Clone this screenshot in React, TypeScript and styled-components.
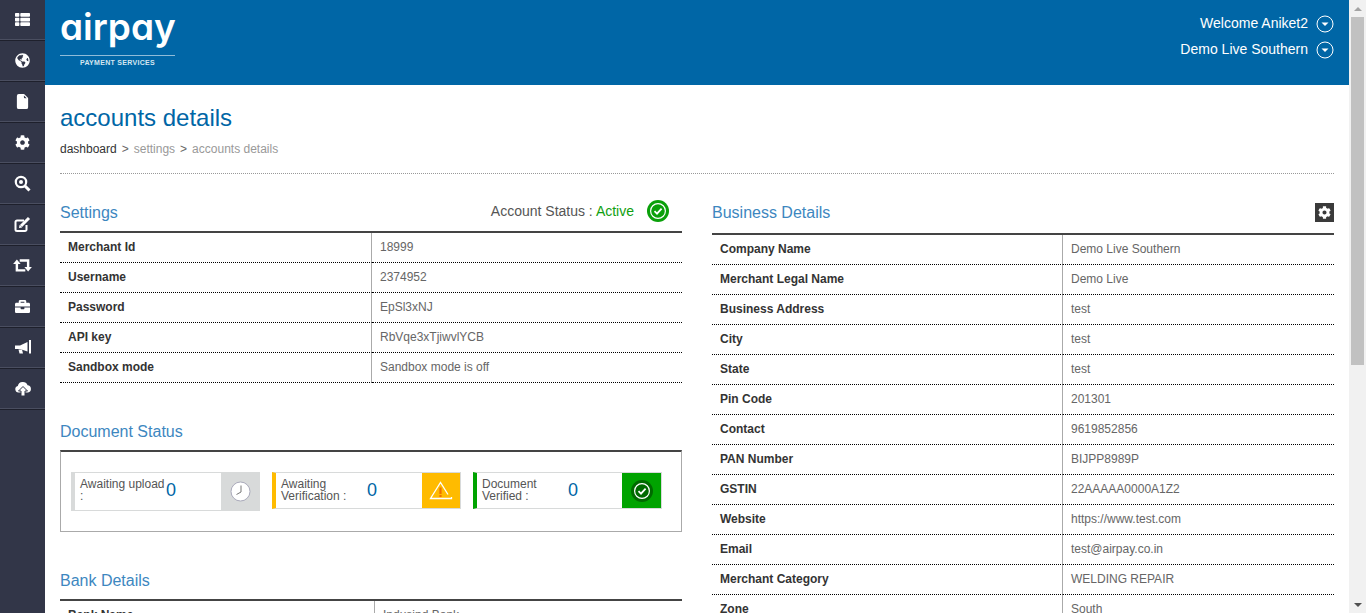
import React from 'react';
import styled, { createGlobalStyle } from 'styled-components';
import { FaThList, FaGlobeAmericas, FaCog, FaBriefcase } from 'react-icons/fa';
import { BsFileEarmarkFill } from 'react-icons/bs';

const GlobalStyle = createGlobalStyle`
  html, body {
    margin: 0;
    padding: 0;
    background: #fff;
    font-family: "Liberation Sans", Arial, sans-serif;
    color: #333;
  }
  * { box-sizing: border-box; }
`;

const Page = styled.div`
  display: flex;
  height: 100vh;
  overflow: hidden;
`;

const Sidebar = styled.nav`
  width: 45px;
  flex: none;
  background: #323648;
`;

const NavItem = styled.a`
  display: flex;
  height: 41px;
  align-items: center;
  justify-content: center;
  padding-bottom: 2px;
  color: #fff;
  font-size: 15px;
  border-bottom: 1px solid #1e202c;
  box-shadow: inset 0 -1px 0 #4a4e60;
`;

const Main = styled.div`
  flex: 1;
  min-width: 0;
  overflow: hidden;
`;

// the page's own scrollbar, as the browser drew it in the picture
const ScrollTrack = styled.div`
  width: 17px;
  flex: none;
  background: #f1f1f1;
  display: flex;
  flex-direction: column;
  align-items: center;
`;

const ScrollArrow = styled.div<{ $down?: boolean }>`
  height: 17px;
  flex: none;
  display: flex;
  align-items: center;
  justify-content: center;
  &::before {
    content: '';
    border-left: 4px solid transparent;
    border-right: 4px solid transparent;
    border-${({ $down }) => ($down ? 'top' : 'bottom')}: 4px solid ${({ $down }) => ($down ? '#505050' : '#a3a3a3')};
  }
`;

const ScrollThumb = styled.div`
  width: 13px;
  height: 348px;
  flex: none;
  background: #c1c1c1;
`;

const ScrollSpace = styled.div`
  flex: 1;
`;

const Header = styled.header`
  height: 85px;
  background: #0066a6;
  padding: 0 15px;
  display: flex;
  justify-content: space-between;
  color: #fff;
`;

const Logo = styled.div`
  width: 115px;
  margin-top: 6px;
`;

const LogoWord = styled.div`
  font-family: "Inter", "Open Sans", sans-serif;
  font-feature-settings: "cv11";
  font-weight: 600;
  font-size: 37px;
  line-height: 42px;
  height: 49px;
`;

const LogoTag = styled.div`
  border-top: 1px solid #8fbcd9;
  font-size: 7px;
  font-weight: bold;
  line-height: 13px;
  letter-spacing: 0.3px;
  text-align: center;
  color: #d5e6f1;
`;

const UserMenu = styled.div`
  padding-top: 11px;
  display: flex;
  flex-direction: column;
  align-items: flex-end;
`;

const UserRow = styled.div`
  display: flex;
  align-items: center;
  gap: 8px;
  height: 26px;
  font-size: 14px;
`;

const UserName = styled.span`
  margin-bottom: 2px;
`;

const Content = styled.main`
  padding: 0 15px;
`;

const Title = styled.h1`
  margin: 0;
  padding-top: 19px;
  font-size: 24px;
  line-height: 28px;
  font-weight: normal;
  color: #0066a6;
`;

const Breadcrumb = styled.div`
  display: flex;
  gap: 5px;
  margin-top: 9px;
  height: 33px;
  padding-top: 1px;
  font-size: 12px;
  line-height: 14px;
  color: #999;
  border-bottom: 1px dotted #999;
`;

const Crumb = styled.span<{ $active?: boolean }>`
  color: ${({ $active }) => ($active ? '#333' : '#999')};
`;

const CrumbSep = styled.span`
  color: #666;
`;

const Columns = styled.div`
  display: grid;
  grid-template-columns: 622px 622px;
  column-gap: 30px;
  padding-top: 26px;
`;

const Section = styled.section<{ $gap?: number }>`
  margin-bottom: ${({ $gap }) => $gap ?? 0}px;
`;

const SectionHead = styled.div<{ $height: number }>`
  display: flex;
  justify-content: space-between;
  align-items: flex-start;
  height: ${({ $height }) => $height}px;
`;

const SectionTitle = styled.h2`
  margin: 0;
  padding-top: 3px;
  font-size: 16px;
  line-height: 20px;
  font-weight: normal;
  color: #3d87bf;
`;

const AccountStatus = styled.div`
  display: flex;
  align-items: center;
  gap: 13px;
  padding: 0 13px 0 0;
  height: 22px;
  font-size: 14px;
  color: #555;
`;

const ActiveText = styled.span`
  color: #10a010;
`;

const GearButton = styled.div`
  width: 19px;
  height: 19px;
  margin-top: 3px;
  background: #3a3a3a;
  color: #fff;
  display: flex;
  align-items: center;
  justify-content: center;
  font-size: 13px;
`;

const DetailTable = styled.div<{ $labelWidth: number }>`
  border-top: 2px solid #444;
  display: grid;
  grid-template-columns: ${({ $labelWidth }) => $labelWidth}px 1fr;
`;

const LabelCell = styled.div`
  height: 30px;
  padding: 0 8px 2px;
  display: flex;
  align-items: center;
  font-size: 12px;
  font-weight: bold;
  color: #333;
  border-bottom: 1px dotted #000;
  border-right: 1px solid #aaa;
`;

const ValueCell = styled.div`
  height: 30px;
  padding: 0 8px 2px;
  display: flex;
  align-items: center;
  font-size: 12px;
  color: #666;
  border-bottom: 1px dotted #000;
`;

const StatusBox = styled.div`
  height: 82px;
  border: 1px solid #aaa;
  border-top: 2px solid #444;
  padding: 20px 10px;
  display: flex;
  align-items: flex-start;
  gap: 12px;
`;

const Widget = styled.div<{ $accent: string; $tall?: boolean }>`
  width: 189px;
  height: ${({ $tall }) => ($tall ? 39 : 37)}px;
  display: flex;
  align-items: stretch;
  border: 1px solid #d8dada;
  border-left: 4px solid ${({ $accent }) => $accent};
`;

const WidgetLabel = styled.div`
  width: 91px;
  padding: 5px 0 0 5px;
  font-size: 12px;
  line-height: 12px;
  color: #555;
`;

const WidgetCount = styled.div`
  flex: 1;
  padding-top: 7px;
  font-size: 18px;
  line-height: 20px;
  color: #0066a6;
`;

const WidgetIcon = styled.div<{ $bg: string; $wide?: boolean }>`
  width: ${({ $wide }) => ($wide ? 39 : 38)}px;
  flex: none;
  background: ${({ $bg }) => $bg};
  display: flex;
  align-items: center;
  justify-content: center;
`;

const ClockIcon = () => (
  <svg width="21" height="21" viewBox="0 0 21 21">
    <circle cx="10.5" cy="10.5" r="9.5" fill="#fff" stroke="#aab" strokeWidth="1" />
    <path d="M11 4.5V11L6.5 13.5" fill="none" stroke="#777" strokeWidth="1" />
  </svg>
);

const WarningIcon = () => (
  <svg width="24" height="20" viewBox="0 0 24 20">
    <path d="M19 13.5L11.5 1.5L1.5 17.5H22.5V16" fill="none" stroke="#fff" strokeWidth="1.3" />
    <path d="M11.5 6.5V13" stroke="#f07000" strokeWidth="2.2" />
    <path d="M11.5 14V16" stroke="#f07000" strokeWidth="2.2" />
  </svg>
);

const CheckBadge = ({ size, ring }: { size: number; ring: string }) => (
  <svg width={size} height={size} viewBox="0 0 22 22">
    <circle cx="11" cy="11" r="11" fill={ring} />
    <circle cx="11" cy="11" r="7.4" fill="none" stroke="#fff" strokeWidth="1.2" />
    <path d="M7.5 11.2L10 13.6L14.6 8.6" fill="none" stroke="#fff" strokeWidth="1.8" />
  </svg>
);

const DropCircle = () => (
  <svg width="18" height="18" viewBox="0 0 18 18">
    <circle cx="9" cy="9" r="8" fill="none" stroke="#fff" strokeWidth="1" />
    <path d="M5.5 7.5H12.5L9 11Z" fill="#fff" />
  </svg>
);

const ZoomIcon = () => (
  <svg width="17" height="17" viewBox="0 0 17 17">
    <circle cx="7" cy="7" r="5.2" fill="none" stroke="#fff" strokeWidth="2.2" />
    <circle cx="7" cy="7" r="2" fill="#fff" />
    <path d="M11 11L15.5 15.5" stroke="#fff" strokeWidth="3" />
  </svg>
);

const EditIcon = () => (
  <svg width="17" height="17" viewBox="0 0 17 17">
    <path
      d="M12.5 9V13.5A1.5 1.5 0 0 1 11 15H3A1.5 1.5 0 0 1 1.5 13.5V6A1.5 1.5 0 0 1 3 4.5H10"
      fill="none"
      stroke="#fff"
      strokeWidth="2"
    />
    <path d="M7 10L15 2" stroke="#fff" strokeWidth="3" />
    <path d="M5 12L5.6 8.8L8.2 11.4Z" fill="#fff" />
  </svg>
);

const RetweetIcon = () => (
  <svg width="19" height="15" viewBox="0 0 20 16">
    <path d="M0 6.5L4 1.5L8 6.5Z" fill="#fff" />
    <path d="M4 6V13.2H13" fill="none" stroke="#fff" strokeWidth="2.6" />
    <path d="M7 2.6H16V10" fill="none" stroke="#fff" strokeWidth="2.6" />
    <path d="M12 9.5L16 14.5L20 9.5Z" fill="#fff" />
  </svg>
);

const BullhornIcon = () => (
  <svg width="18" height="16" viewBox="0 0 18 16">
    <path d="M1 6.5H6L13.5 3V12.5L6 10H1Z" fill="#fff" />
    <path d="M15 1H17V14.5H15Z" fill="#fff" />
    <path d="M4.5 10.5H8L9 14.5H5.5Z" fill="#fff" />
  </svg>
);

const CloudUploadIcon = () => (
  <svg width="18" height="17" viewBox="0 0 18 17">
    <path
      d="M4.5 12.5A3.3 3.3 0 0 1 3.8 6A5.2 5.2 0 0 1 13.6 5.2A3.7 3.7 0 0 1 14 12.5Z"
      fill="#fff"
    />
    <path d="M9 6.5L13.5 11H11V16H7V11H4.5Z" fill="#fff" stroke="#323648" strokeWidth="1" />
  </svg>
);

const navIcons = [
  <FaThList />,
  <FaGlobeAmericas />,
  <BsFileEarmarkFill />,
  <FaCog />,
  <ZoomIcon />,
  <EditIcon />,
  <RetweetIcon />,
  <FaBriefcase />,
  <BullhornIcon />,
  <CloudUploadIcon />,
];

const settingsRows = [
  ['Merchant Id', '18999'],
  ['Username', '2374952'],
  ['Password', 'EpSl3xNJ'],
  ['API key', 'RbVqe3xTjiwvlYCB'],
  ['Sandbox mode', 'Sandbox mode is off'],
];

const bankRows = [['Bank Name', 'Indusind Bank']];

const businessRows = [
  ['Company Name', 'Demo Live Southern'],
  ['Merchant Legal Name', 'Demo Live'],
  ['Business Address', 'test'],
  ['City', 'test'],
  ['State', 'test'],
  ['Pin Code', '201301'],
  ['Contact', '9619852856'],
  ['PAN Number', 'BIJPP8989P'],
  ['GSTIN', '22AAAAA0000A1Z2'],
  ['Website', 'https://www.test.com'],
  ['Email', 'test@airpay.co.in'],
  ['Merchant Category', 'WELDING REPAIR'],
  ['Zone', 'South'],
];

const Rows = ({ rows, labelWidth }: { rows: string[][]; labelWidth: number }) => (
  <DetailTable $labelWidth={labelWidth}>
    {rows.map(([label, value]) => (
      <React.Fragment key={label}>
        <LabelCell>{label}</LabelCell>
        <ValueCell>{value}</ValueCell>
      </React.Fragment>
    ))}
  </DetailTable>
);

export default function App() {
  return (
    <>
      <GlobalStyle />
      <Page>
        <Sidebar>
          {navIcons.map((icon, i) => (
            <NavItem key={i}>{icon}</NavItem>
          ))}
        </Sidebar>
        <Main>
          <Header>
            <Logo>
              <LogoWord>airpay</LogoWord>
              <LogoTag>PAYMENT SERVICES</LogoTag>
            </Logo>
            <UserMenu>
              <UserRow>
                <UserName>Welcome Aniket2</UserName>
                <DropCircle />
              </UserRow>
              <UserRow>
                <UserName>Demo Live Southern</UserName>
                <DropCircle />
              </UserRow>
            </UserMenu>
          </Header>
          <Content>
            <Title>accounts details</Title>
            <Breadcrumb>
              <Crumb $active>dashboard</Crumb>
              <CrumbSep>&gt;</CrumbSep>
              <Crumb>settings</Crumb>
              <CrumbSep>&gt;</CrumbSep>
              <Crumb>accounts details</Crumb>
            </Breadcrumb>
            <Columns>
              <div>
                <Section $gap={36}>
                  <SectionHead $height={31}>
                    <SectionTitle>Settings</SectionTitle>
                    <AccountStatus>
                      <span>
                        Account Status : <ActiveText>Active</ActiveText>
                      </span>
                      <CheckBadge size={22} ring="#0aa00a" />
                    </AccountStatus>
                  </SectionHead>
                  <Rows rows={settingsRows} labelWidth={312} />
                </Section>
                <Section $gap={36}>
                  <SectionHead $height={31}>
                    <SectionTitle>Document Status</SectionTitle>
                  </SectionHead>
                  <StatusBox>
                    <Widget $accent="#d8dada" $tall>
                      <WidgetLabel>Awaiting upload :</WidgetLabel>
                      <WidgetCount>0</WidgetCount>
                      <WidgetIcon $bg="#d8dada">
                        <ClockIcon />
                      </WidgetIcon>
                    </Widget>
                    <Widget $accent="#ffbb00">
                      <WidgetLabel>Awaiting Verification :</WidgetLabel>
                      <WidgetCount>0</WidgetCount>
                      <WidgetIcon $bg="#ffbb00">
                        <WarningIcon />
                      </WidgetIcon>
                    </Widget>
                    <Widget $accent="#00a300">
                      <WidgetLabel>Document Verified :</WidgetLabel>
                      <WidgetCount>0</WidgetCount>
                      <WidgetIcon $bg="#00a300" $wide>
                        <CheckBadge size={22} ring="#006a00" />
                      </WidgetIcon>
                    </Widget>
                  </StatusBox>
                </Section>
                <Section>
                  <SectionHead $height={31}>
                    <SectionTitle>Bank Details</SectionTitle>
                  </SectionHead>
                  <Rows rows={bankRows} labelWidth={315} />
                </Section>
              </div>
              <div>
                <Section>
                  <SectionHead $height={33}>
                    <SectionTitle>Business Details</SectionTitle>
                    <GearButton>
                      <FaCog />
                    </GearButton>
                  </SectionHead>
                  <Rows rows={businessRows} labelWidth={351} />
                </Section>
              </div>
            </Columns>
          </Content>
        </Main>
        <ScrollTrack>
          <ScrollArrow />
          <ScrollThumb />
          <ScrollSpace />
          <ScrollArrow $down />
        </ScrollTrack>
      </Page>
    </>
  );
}
